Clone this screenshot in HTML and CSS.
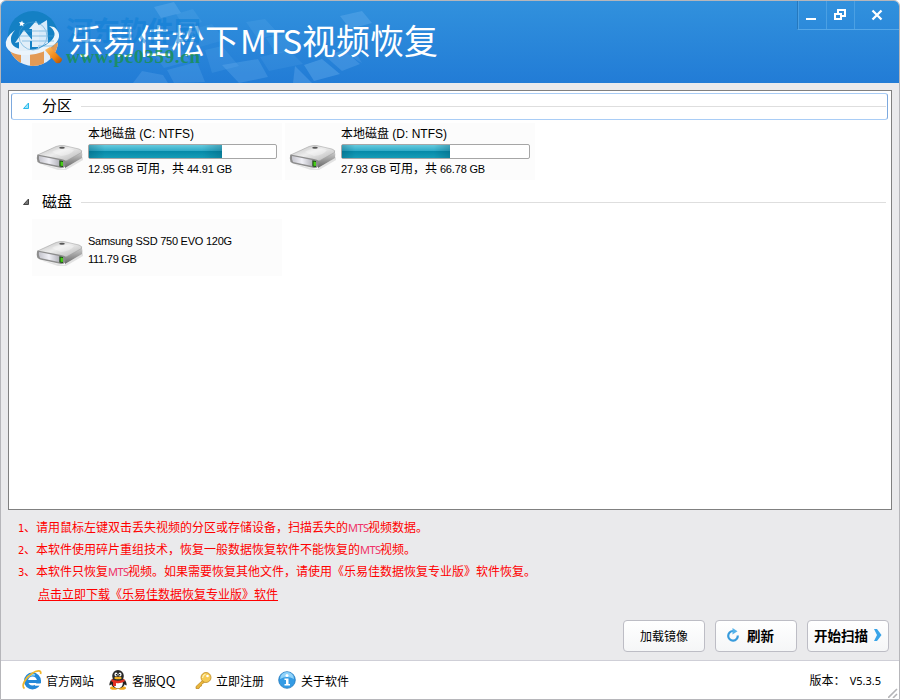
FILE: index.html
```html
<!DOCTYPE html>
<html lang="zh-CN">
<head>
  <meta charset="UTF-8">
  <title>乐易佳松下MTS视频恢复</title>
  <link rel="stylesheet" href="styles.css">
</head>
<body>

<!-- shared drive icon -->
<svg class="defs" width="0" height="0">
  <defs>
    <linearGradient id="driveTop" x1="0" y1="0" x2="1" y2="1">
      <stop offset="0" stop-color="#b5b5b5"/>
      <stop offset=".45" stop-color="#ededed"/>
      <stop offset="1" stop-color="#b0b0b0"/>
    </linearGradient>
    <linearGradient id="driveSide" x1="0" y1="0" x2="0" y2="1">
      <stop offset="0" stop-color="#d5d5d5"/>
      <stop offset="1" stop-color="#666"/>
    </linearGradient>
    <linearGradient id="driveFront" x1="0" y1="0" x2="1" y2="0">
      <stop offset="0" stop-color="#c4c4cc"/>
      <stop offset=".5" stop-color="#f0f0f6"/>
      <stop offset="1" stop-color="#b5b5bd"/>
    </linearGradient>
    <symbol id="drive" viewBox="0 0 48 28">
      <path d="M4 20 L28 25 L47 13 L47 16 L30 26 L22 26Z" fill="#bbb" opacity=".4"/>
      <path d="M28 13 L45.500 7 Q47 10 46 14 L29 24Z" fill="url(#driveSide)"/>
      <path d="M1.500 11 L20 2.500 Q24 1 28 1.600 L43 5 Q47 6.500 45.500 8.500 L31 16.500 Q28 18 25 17.500 L2 13Z" fill="url(#driveTop)" stroke="#999" stroke-width=".5"/>
      <path d="M16 8 Q24 2 38 6 Q35 11 25 12Z" fill="#fff" opacity=".35"/>
      <path d="M1.500 10.500 Q0 14 1.500 18 L4 19.500 L25 24 Q28 24 29 22.500 L30 17 Q28 15.500 25 15Z" fill="#8d8d8d"/>
      <path d="M3 12 L23 16 V22 L4 18 Q2.500 15 3 12Z" fill="url(#driveFront)"/>
      <path d="M23.500 16.500 L27 17 V23 L23.500 22.500Z" fill="#184c12"/>
      <path d="M24.500 17.500 L27 18 V22 L24.500 21.700Z" fill="#48cc18"/>
      <ellipse cx="26" cy="3.800" rx="2.800" ry="1" fill="#555"/>
    </symbol>
  </defs>
</svg>

<div class="window">
  <header class="titlebar">
    <svg class="tiles" width="460" height="82" viewBox="1 1 460 82">
      <g fill="#9fd4ff">
        <path d="M154 7 L174 2 L181 13 L161 18Z" opacity=".2"/>
        <path d="M176 14 L193 9 L202 22 L184 27Z" opacity=".1"/>
        <path d="M182 32 L212 24 L225 40 L196 48Z" opacity=".07"/>
        <path d="M152 52 L177 44 L190 61 L164 68Z" opacity=".1"/>
        <path d="M142 71 L163 75 L168 83 L133 83Z" opacity=".16"/>
        <path d="M167 70 L197 62 L205 82 L174 83Z" opacity=".14"/>
        <path d="M205 50 L222 46 L239 66 L212 73Z" opacity=".1"/>
        <path d="M222 65 L258 59 L268 77 L239 83Z" opacity=".17"/>
        <path d="M246 22 L265 19 L279 34 L258 39Z" opacity=".1"/>
        <path d="M266 38 L285 34 L297 49 L276 54Z" opacity=".1"/>
        <path d="M260 57 L289 50 L303 64 L269 71Z" opacity=".09"/>
        <path d="M295 66 L312 83 L293 83Z" opacity=".2"/>
        <path d="M304 65 L322 59 L340 74 L314 81Z" opacity=".22"/>
        <path d="M325 56 L344 50 L360 64 L342 71Z" opacity=".18"/>
        <path d="M342 49 L352 46 L362 63 L358 61Z" opacity=".13"/>
        <path d="M340 16 L362 11 L372 23 L350 29Z" opacity=".2"/>
      </g>
    </svg>

    <svg class="logo" width="62" height="62" viewBox="0 0 62 62">
      <defs>
        <linearGradient id="handle" x1="0" y1="0" x2="1" y2="1">
          <stop offset="0" stop-color="#ffc36b"/>
          <stop offset=".6" stop-color="#ef8411"/>
          <stop offset="1" stop-color="#a95009"/>
        </linearGradient>
        <clipPath id="globe"><circle cx="31" cy="32" r="25"/></clipPath>
      </defs>
      <circle cx="31" cy="27" r="25" fill="#1480c4"/>
      <g clip-path="url(#globe)">
        <path d="M4 38 Q30 52 58 32 V60 H4Z" fill="#e4eef8"/>
        <path d="M8 41 L19 44 V60 H8Z M28 44 L42 41 V60 H28Z M48 38 L58 32 V52 H48Z" fill="#e39a55"/>
      </g>
      <path d="M13 21 Q2 29 4 37 Q8 47 26 46 Q43 45 54 34 Q61 25 52 18 L47 17 Q57 24 49 32 Q39 41 25 41 Q10 40 9 32 Q8 27 13 21Z" fill="#eaf4fc"/>
      <path d="M13 34 L22 21 L31 32 H28 V42 H17 V33Z" fill="#e2eff9"/>
      <path d="M32 19 L45 11 L46 34 L36 39 V20Z" fill="#d7eafa"/>
      <path d="M27 20 L34 12 L40 21 H37 V38 H30 V20Z" fill="#e2eff9"/>
      <path d="M20 11.500l.8 2.200 2.200.3-1.800 1.200.3 2.300-1.700-1.300-2.200.8.700-2-1.300-1.700h2.200z" fill="#fff"/>
      <g fill="none" stroke="#4a9fd4" opacity=".55">
        <circle cx="31" cy="27" r="14"/>
        <path d="M20 22h26M18 27h34M20 32h32M36 37h16"/>
      </g>
      <path d="M43 41 L48 38 L60 50 Q60 55 54 54Z" fill="url(#handle)"/>
    </svg>

    <h1 class="app-name">乐易佳松下<span class="latin">MTS</span>视频恢复</h1>

    <div class="watermark">
      <div class="wm-name">河东软件园</div>
      <div class="wm-url">www.pc0359.cn</div>
    </div>

    <div class="win-controls">
      <button aria-label="最小化"><svg width="14" height="14" viewBox="0 0 14 14"><path d="M2 11h10" stroke="#fff" stroke-width="2"/></svg></button>
      <button aria-label="还原"><svg width="14" height="14" viewBox="0 0 14 14"><path d="M5 5V2h7v6H8M2 6h6v5h-6z" fill="none" stroke="#fff" stroke-width="2"/></svg></button>
      <button class="close" aria-label="关闭"><svg width="12" height="12" viewBox="0 0 12 12"><path d="M1.500 1.500l9 9M10.500 1.500l-9 9" stroke="#fff" stroke-width="2.300"/></svg></button>
    </div>
  </header>

  <main class="content">
    <section class="panel">
      <div class="group-head selected">
        <svg class="arrow" width="8" height="8" viewBox="0 0 8 8"><path d="M6.500 1v5.500h-5z" fill="#9be4fb" stroke="#28b8ea"/></svg>
        <h2>分区</h2>
        <span class="rule"></span>
      </div>
      <div class="items">
        <div class="item">
          <svg class="drive" width="48" height="28"><use href="#drive"/></svg>
          <div class="info">
            <div class="name">本地磁盘 (C: NTFS)</div>
            <div class="bar"><div class="fill" style="width: 71.2%"></div></div>
            <div class="size">12.95 GB <span>可用，共</span> 44.91 GB</div>
          </div>
        </div>
        <div class="item">
          <svg class="drive" width="48" height="28"><use href="#drive"/></svg>
          <div class="info">
            <div class="name">本地磁盘 (D: NTFS)</div>
            <div class="bar"><div class="fill" style="width: 58%"></div></div>
            <div class="size">27.93 GB <span>可用，共</span> 66.78 GB</div>
          </div>
        </div>
      </div>

      <div class="group-head">
        <svg class="arrow" width="8" height="8" viewBox="0 0 8 8"><path d="M6.500 1v5.500h-5z" fill="#777" stroke="#444"/></svg>
        <h2>磁盘</h2>
        <span class="rule"></span>
      </div>
      <div class="items">
        <div class="item physical">
          <svg class="drive" width="48" height="28"><use href="#drive"/></svg>
          <div class="info">
            <div class="model">Samsung SSD 750 EVO 120G</div>
            <div class="model">111.79 GB</div>
          </div>
        </div>
      </div>
    </section>

    <div class="notes">
      <p><span class="num">1</span>、请用鼠标左键双击丢失视频的分区或存储设备，扫描丢失的<span class="mts">MTS</span>视频数据。</p>
      <p><span class="num">2</span>、本软件使用碎片重组技术，恢复一般数据恢复软件不能恢复的<span class="mts">MTS</span>视频。</p>
      <p><span class="num">3</span>、本软件只恢复<span class="mts">MTS</span>视频。如果需要恢复其他文件，请使用《乐易佳数据恢复专业版》软件恢复。</p>
      <p class="download"><a href="#">点击立即下载《乐易佳数据恢复专业版》软件</a></p>
    </div>

    <div class="actions">
      <button class="btn">加载镜像</button>
      <button class="btn refresh">
        <svg width="14" height="14" viewBox="0 0 14 14"><path d="M7 3A4.800 4.800 0 1 0 11.800 7.500" fill="none" stroke="#389bdc" stroke-width="2.200"/><path d="M6.500 0L11.500 3.200L6.500 6.500z" fill="#55b3ea"/></svg>
        刷新
      </button>
      <button class="btn scan">
        开始扫描
        <svg width="8" height="12" viewBox="0 0 8 12"><path d="M0 0h3l4.500 6L3 12H0l3-6z" fill="#39a4e8"/></svg>
      </button>
    </div>
  </main>

  <footer class="statusbar">
    <a class="link site" href="#">
      <svg width="20" height="20" viewBox="0 0 20 20">
        <circle cx="10.500" cy="11" r="6.500" fill="none" stroke="#2388d8" stroke-width="4"/>
        <path d="M6 11.500h13" stroke="#2388d8" stroke-width="3"/>
        <path d="M13 13.500h7v2.200h-7z" fill="#fff"/>
        <path d="M5 8Q8 3.500 13 5" fill="none" stroke="#8bd7fa" stroke-width="1.500"/>
        <path d="M2.500 18.500C-1 16 3 8 10 3.500C15 0 20 0 18.500 4" fill="none" stroke="#efb62b" stroke-width="1.700"/>
      </svg>
      官方网站
    </a>
    <a class="link service" href="#">
      <svg width="18" height="20" viewBox="0 0 18 20">
        <path d="M2 10Q-.5 14 .8 15.500L4 13M16 10q2.500 4 1.200 5.500L14 13" fill="#222"/>
        <ellipse cx="5" cy="18" rx="4" ry="1.800" fill="#efa91c"/>
        <ellipse cx="13" cy="18" rx="4" ry="1.800" fill="#efa91c"/>
        <ellipse cx="9" cy="12.500" rx="7" ry="6" fill="#222"/>
        <ellipse cx="9" cy="13.500" rx="4.800" ry="4.800" fill="#fff"/>
        <ellipse cx="9" cy="6" rx="5.800" ry="6" fill="#292929"/>
        <ellipse cx="7" cy="4.500" rx="1.500" ry="2" fill="#fff"/>
        <ellipse cx="11" cy="4.500" rx="1.500" ry="2" fill="#fff"/>
        <circle cx="7.400" cy="4.800" r=".7"/><circle cx="10.600" cy="4.800" r=".7"/>
        <ellipse cx="9" cy="8" rx="3.700" ry="1.300" fill="#f4b323"/>
        <path d="M2.500 9Q9 12.500 15.500 9V11.500Q11 14 7 13V16H4V12L2.500 11.500Z" fill="#e33123"/>
      </svg>
      客服<span class="qq">QQ</span>
    </a>
    <a class="link register" href="#">
      <svg width="17" height="17" viewBox="0 0 17 17">
        <path d="M9 7L1 14.500V16.500H4L5 14.500L6.500 14V12.500L11 9Z" fill="#e9b63b" stroke="#b98219" stroke-width=".7"/>
        <circle cx="11" cy="5.500" r="5" fill="#f5ca54" stroke="#bd8a25" stroke-width=".8"/>
        <circle cx="12.500" cy="4" r="1.300" fill="#fff"/>
        <path d="M7.500 6Q8 3 10.500 2" fill="none" stroke="#fff1b4" stroke-width="1.300"/>
      </svg>
      立即注册
    </a>
    <a class="link about" href="#">
      <svg width="18" height="18" viewBox="0 0 18 18">
        <circle cx="9" cy="9" r="8.300" fill="#349be4" stroke="#2279bd" stroke-width=".8"/>
        <path d="M2 8A7 7 0 0 1 16 8Q9 4 2 8Z" fill="#8fd2fa"/>
        <circle cx="9" cy="4.500" r="1.500" fill="#fff"/>
        <path d="M6.500 7.500H10.500V13H12V14.500H6.500V13H8V9H6.500Z" fill="#fff"/>
      </svg>
      关于软件
    </a>
    <div class="version">版本：<span>V5.3.5</span></div>
    <svg class="grip" width="10" height="10" viewBox="0 0 10 10"><path d="M0 10L9 1M5 10l4-4" stroke="#b5b5b8" stroke-width="1.600"/></svg>
  </footer>
</div>

</body>
</html>
```
FILE: styles.css
```css
* {
  box-sizing: border-box;
}
body {
  margin: 0;
  background: #fff;
  font-family: "Liberation Sans", "Noto Sans CJK SC", sans-serif;
  font-size: 12px;
  color: #000;
}
h1, h2, p {
  margin: 0;
  font-weight: normal;
}
button {
  padding: 0;
  font-family: inherit;
  color: inherit;
}
a {
  color: inherit;
  text-decoration: none;
}
svg {
  flex: none;
}
.defs {
  position: absolute;
}
.window {
  position: relative;
  display: flex;
  flex-direction: column;
  width: 900px;
  height: 700px;
  border: 1px solid #b6b6ba;
  border-radius: 6px 6px 0 0;
  overflow: hidden;
}

/* title bar */
.titlebar {
  position: relative;
  display: flex;
  align-items: flex-start;
  height: 82px;
  flex: none;
  background: linear-gradient(#3191dd, #227cd6);
}
.tiles {
  position: absolute;
  left: 0;
  top: 0;
}
.logo {
  position: relative;
  margin: 8px 0 0 1px;
}
.app-name {
  position: relative;
  margin: 14px 0 0 5px;
  font-size: 34px;
  line-height: 50px;
  font-family: "Noto Sans CJK SC", sans-serif;
  font-weight: 400;
  color: #fff;
  white-space: nowrap;
}
.app-name .latin {
  display: inline-block;
  width: 63px;
  padding-left: 1px;
  font-family: "Noto Sans CJK SC", sans-serif;
  font-size: 33px;
  letter-spacing: -1.3px;
}
.watermark {
  position: absolute;
  left: 65px;
  top: 11px;
  font-weight: bold;
  white-space: nowrap;
}
.wm-name {
  font-family: "Noto Sans CJK SC", sans-serif;
  font-size: 27px;
  line-height: 35px;
  color: rgba(15, 127, 214, 0.6);
}
.wm-url {
  font-family: "Liberation Serif", serif;
  font-size: 19px;
  line-height: 20px;
  letter-spacing: 0.7px;
  color: rgba(25, 145, 75, 0.8);
}
.win-controls {
  display: flex;
  height: 29px;
  margin-left: auto;
  border-left: 1px solid #2678bd;
  border-bottom: 1px solid #55a7e8;
}
.win-controls button {
  display: flex;
  align-items: center;
  justify-content: center;
  width: 28px;
  padding-right: 3px;
  border: 0;
  border-left: 1px solid #4ba0e3;
  background: none;
}
.win-controls button + button {
  padding-right: 1px;
}
.win-controls .close {
  width: 45px;
}

/* device list */
.content {
  flex: 1;
  padding: 7px 7px 0;
  background: #eaeaec;
}
.panel {
  width: 884px;
  height: 420px;
  padding: 2px;
  border: 1px solid #808080;
  background: #fff;
}
.group-head {
  display: flex;
  align-items: center;
  width: 877px;
  height: 27px;
  padding: 0 1px 0 10px;
  border: 1px solid transparent;
  border-radius: 3px;
}
.group-head.selected {
  border-color: #a9cdf6;
  border-left-color: #7da9de;
  border-right-color: #7da9de;
}
.arrow {
  margin-bottom: 2px;
}
.group-head h2 {
  width: 39px;
  margin: 0 0 4px 12px;
  font-family: "Noto Sans CJK SC", sans-serif;
  font-size: 15px;
  line-height: 20px;
}
.rule {
  flex: 1;
  height: 1px;
  background: #dedede;
}
.items {
  display: flex;
  gap: 3px;
  padding: 3px 0 0 21px;
  height: 69px;
}
.item {
  display: flex;
  width: 250px;
  height: 57px;
  padding: 1px 0 0 4px;
  background: #fcfcfc;
}
.drive {
  margin-top: 20px;
}
.info {
  margin-left: 4px;
}
.name {
  height: 20px;
  font-size: 12px;
  line-height: 21px;
  white-space: nowrap;
}
.bar {
  width: 189px;
  height: 15px;
  padding: 0;
  border: 1px solid #a6a6a6;
  border-radius: 2px;
  background: #fff;
}
.fill {
  height: 100%;
  background: linear-gradient(90deg, rgba(0, 75, 100, 0.3), transparent 12%, transparent 85%, rgba(0, 75, 100, 0.3)),
    linear-gradient(#65cade, #30abc7 45%, #078ba9 50%, #159cb7);
}
.size {
  font-size: 11px;
  line-height: 21px;
  letter-spacing: -0.17px;
  white-space: nowrap;
}
.size span {
  font-size: 12px;
  letter-spacing: 0;
}
.physical .info {
  padding-top: 12px;
}
.model {
  font-size: 11px;
  line-height: 18px;
  letter-spacing: -0.25px;
}

/* hints */
.notes {
  padding: 6px 0 0 10px;
  font-family: "Noto Sans CJK SC", sans-serif;
  color: #f00;
}
.notes p {
  height: 22px;
  line-height: 22px;
  white-space: nowrap;
}
.notes .num {
  display: inline-block;
  width: 6px;
  font-family: "DejaVu Sans", sans-serif;
  font-size: 10px;
}
.notes .mts {
  display: inline-block;
  width: 20px;
  font-family: "Noto Sans", sans-serif;
  font-size: 11px;
  letter-spacing: -0.6px;
  color: #ef3268;
}
.notes .download {
  padding-left: 20px;
  line-height: 24px;
}
.download a {
  text-decoration: underline;
}

/* buttons */
.actions {
  display: flex;
  justify-content: flex-end;
  gap: 10px;
  padding: 16px 3px 0 0;
}
.btn {
  display: flex;
  align-items: center;
  justify-content: center;
  width: 82px;
  height: 32px;
  padding-bottom: 1px;
  border: 1px solid #bdbdc5;
  border-radius: 4px;
  background: linear-gradient(#fff, #f5f6f7);
  font-size: 12px;
}
.refresh,
.scan {
  padding-bottom: 2px;
  font-size: 13.5px;
  font-weight: bold;
}
.refresh {
  gap: 7px;
  padding-right: 12px;
}
.scan {
  gap: 6px;
}

/* status bar */
.statusbar {
  position: relative;
  display: flex;
  align-items: center;
  height: 39px;
  flex: none;
  border-top: 1px solid #cfcfd7;
  background: #fff;
}
.link {
  display: flex;
  align-items: center;
  gap: 4px;
}
.site {
  width: 86px;
  margin-left: 21px;
}
.service {
  width: 86px;
  padding-left: 1px;
}
.service svg {
  margin-right: 1px;
}
.service .qq {
  margin-left: -4px;
  font-family: "Noto Sans CJK SC", sans-serif;
  font-size: 13px;
}
.register {
  width: 84px;
}
.register svg {
  margin-left: 1px;
}
.about {
  gap: 5px;
}
.version {
  margin-left: auto;
  padding: 0 18px 2px 0;
}
.version span {
  margin-left: 4px;
  font-family: "Noto Sans", sans-serif;
  font-size: 11px;
}
.grip {
  position: absolute;
  right: 1px;
  bottom: 1px;
}
```
